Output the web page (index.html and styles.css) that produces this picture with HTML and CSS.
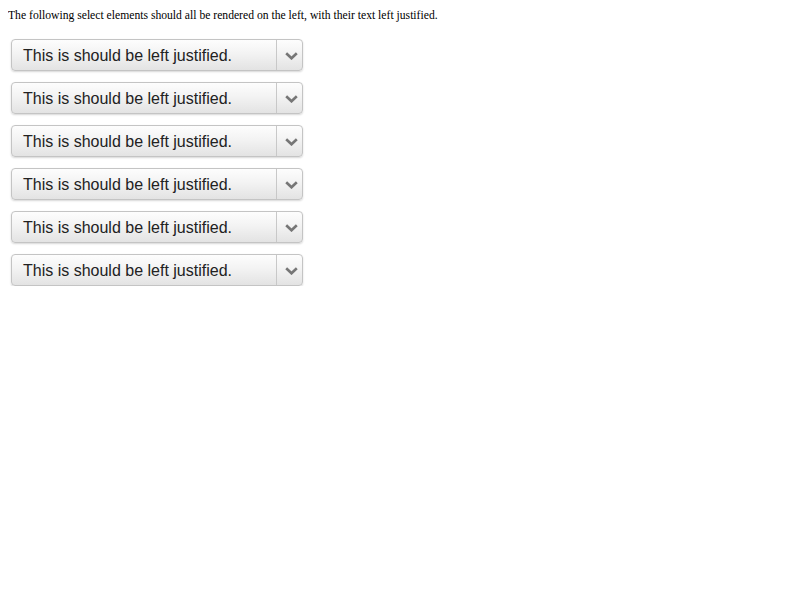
FILE: index.html
```html
<!DOCTYPE html>
<html>
<head>
<meta charset="utf-8">
<link rel="stylesheet" href="styles.css">
</head>
<body>
<p class="intro">The following select elements should all be rendered on the left, with their text left justified.</p>
<div class="list">
  <div class="select"><span class="label">This is should be left justified.</span><span class="arrow"><svg width="13" height="8" viewBox="0 0 13 8"><path d="M1.2 1.2 L6.5 6.3 L11.8 1.2" fill="none" stroke="#767676" stroke-width="2.6"/></svg></span></div>
  <div class="select"><span class="label">This is should be left justified.</span><span class="arrow"><svg width="13" height="8" viewBox="0 0 13 8"><path d="M1.2 1.2 L6.5 6.3 L11.8 1.2" fill="none" stroke="#767676" stroke-width="2.6"/></svg></span></div>
  <div class="select"><span class="label">This is should be left justified.</span><span class="arrow"><svg width="13" height="8" viewBox="0 0 13 8"><path d="M1.2 1.2 L6.5 6.3 L11.8 1.2" fill="none" stroke="#767676" stroke-width="2.6"/></svg></span></div>
  <div class="select"><span class="label">This is should be left justified.</span><span class="arrow"><svg width="13" height="8" viewBox="0 0 13 8"><path d="M1.2 1.2 L6.5 6.3 L11.8 1.2" fill="none" stroke="#767676" stroke-width="2.6"/></svg></span></div>
  <div class="select"><span class="label">This is should be left justified.</span><span class="arrow"><svg width="13" height="8" viewBox="0 0 13 8"><path d="M1.2 1.2 L6.5 6.3 L11.8 1.2" fill="none" stroke="#767676" stroke-width="2.6"/></svg></span></div>
  <div class="select"><span class="label">This is should be left justified.</span><span class="arrow"><svg width="13" height="8" viewBox="0 0 13 8"><path d="M1.2 1.2 L6.5 6.3 L11.8 1.2" fill="none" stroke="#767676" stroke-width="2.6"/></svg></span></div>
</div>
</body>
</html>
```
FILE: styles.css
```css
body {
  margin: 8px;
  font-family: "Liberation Serif", serif;
  font-size: 11.65px;
  background: #fff;
}
.intro {
  margin: 0 0 16px 0;
  line-height: 15px;
  color: #000;
}
.list {
  display: flex;
  flex-direction: column;
  gap: 11px;
  margin-left: 3px;
}
.select {
  box-sizing: border-box;
  width: 292px;
  height: 32px;
  display: flex;
  align-items: stretch;
  border: 1px solid #c4c4c4;
  border-radius: 4px;
  background: linear-gradient(to bottom, #fdfdfd 0%, #f3f3f3 45%, #e3e3e3 100%);
  box-shadow: 0 1px 2px rgba(0,0,0,0.16);
  font-family: "Liberation Sans", Arial, sans-serif;
  font-size: 16px;
  color: #222;
}
.label {
  flex: 1;
  display: flex;
  align-items: center;
  padding-left: 11px;
  padding-top: 2px;
  border-right: 1px solid #c8c8c8;
}
.arrow {
  width: 25px;
  box-sizing: border-box;
  display: flex;
  align-items: center;
  padding-left: 8px;
  padding-top: 1px;
}
```
